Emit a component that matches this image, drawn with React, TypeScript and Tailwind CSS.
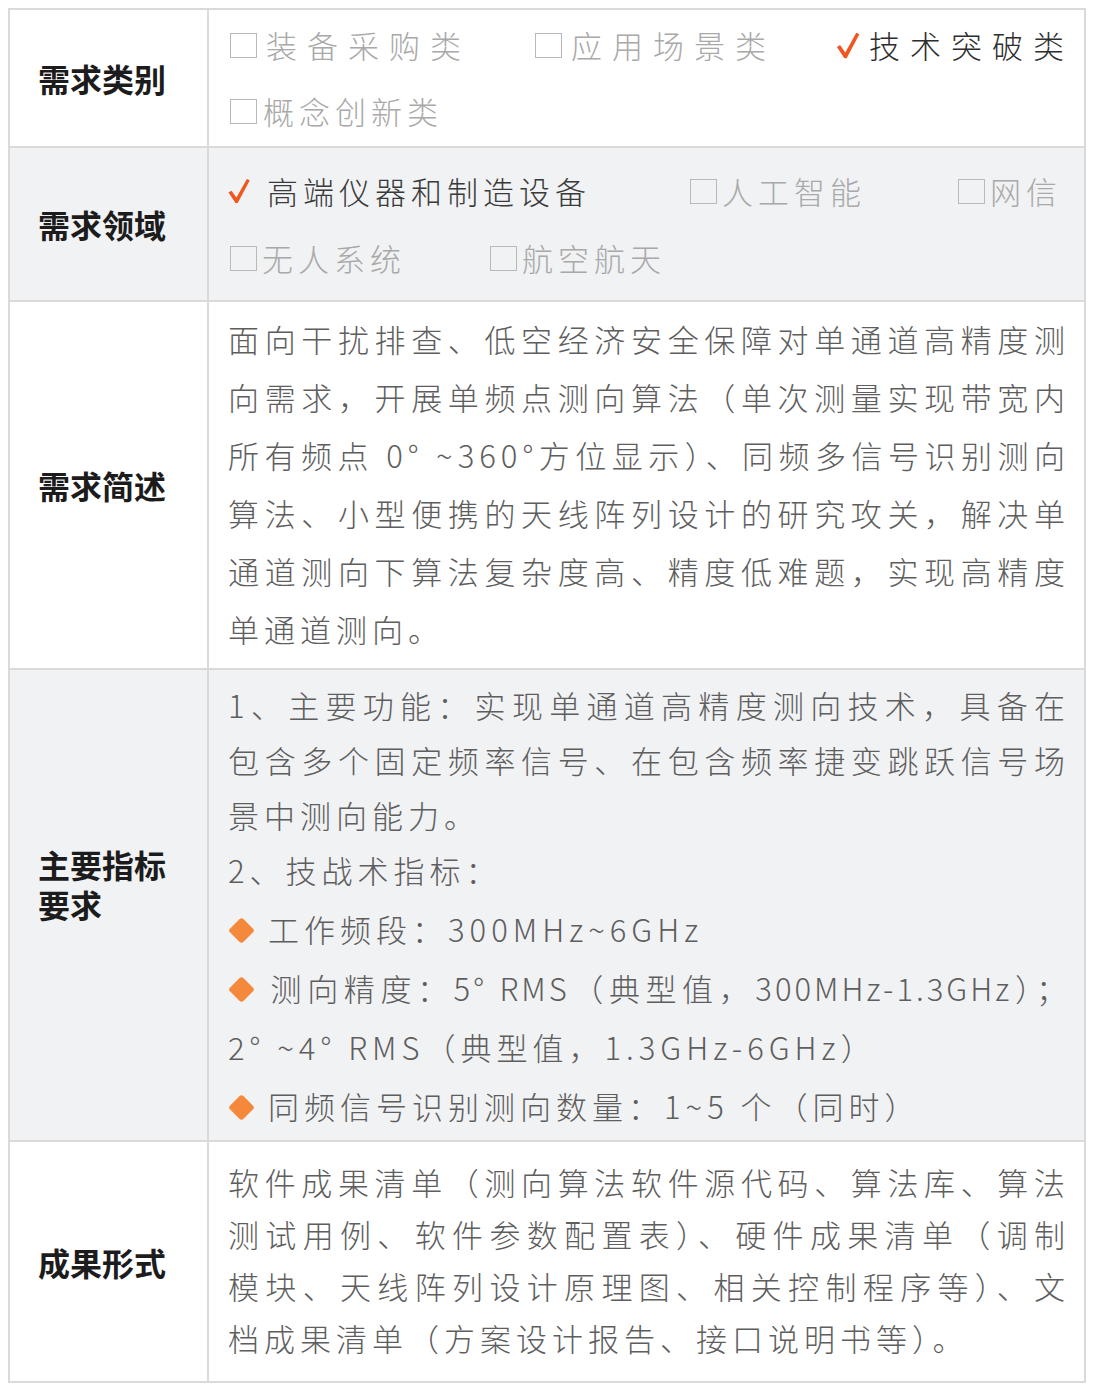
import React from "react";

const Box = () => (
  <span className="inline-block w-[27px] h-[25px] border-[1.5px] border-[#b9b9b9] shrink-0" />
);

const Check = ({ className = "" }: { className?: string }) => (
  <svg viewBox="0 0 24 28" className={className}>
    <path d="M0.5 15.5 L3.8 13.6 L9.2 21.2 L20.6 0.8 L23.8 2.4 L10.6 27.2 L8.2 27.2 Z" fill="#f0561f" />
  </svg>
);

const Diamond = () => (
  <span className="inline-block w-[40px] h-[26px] align-middle relative -top-[3px]">
    <span className="absolute left-[4px] top-[3px] w-[19px] h-[19px] bg-[#f5893b] rotate-45 rounded-[3px]" />
  </span>
);

const J = ({ children, h }: { children: React.ReactNode; h: string }) => (
  <div className={`${h} text-justify [text-align-last:justify]`}>{children}</div>
);
const L = ({ children, h }: { children: React.ReactNode; h: string }) => (
  <div className={h}>{children}</div>
);

const Label = ({ children, extra = "" }: { children: React.ReactNode; extra?: string }) => (
  <div className={`border-r-2 border-[#dadada] flex items-center pl-[28px] pr-[20px] ${extra}`}>
    <div className="text-[32px] font-bold tracking-normal text-[#1c1c1c] leading-[40px]">{children}</div>
  </div>
);

export default function App() {
  return (
    <div className="min-h-[1388px] bg-white pt-[8px] pl-[8px] font-['Noto_Sans_CJK_SC','Noto_Sans',sans-serif]">
      <div className="w-[1078px] border-2 border-[#dadada] text-[31px] font-light tracking-[5px] text-[#5e5e5e]">
        {/* Row 1 */}
        <div className="grid grid-cols-[199px_1fr] border-b-2 border-[#dadada] bg-white">
          <Label>需求类别</Label>
          <div className="pl-[19px] pr-[14px] pt-[6px] pb-[6px] flex flex-col gap-[8px]">
            <div className="h-[58px] flex items-center tracking-[10px] text-[#a9a9a9] whitespace-nowrap">
              <div className="w-[307px] shrink-0 flex items-center">
                <span className="ml-[2px]"><Box /></span>
                <span className="ml-[9px]">装备采购类</span>
              </div>
              <div className="w-[301px] shrink-0 flex items-center">
                <Box />
                <span className="ml-[9px]">应用场景类</span>
              </div>
              <div className="flex items-center text-[#2e2e2e] shrink-0">
                <Check className="w-[24px] h-[27px]" />
                <span className="ml-[9px]">技术突破类</span>
              </div>
            </div>
            <div className="h-[58px] flex items-center text-[#a9a9a9]">
              <span className="ml-[2px]"><Box /></span>
              <span className="ml-[6px]">概念创新类</span>
            </div>
          </div>
        </div>

        {/* Row 2 */}
        <div className="grid grid-cols-[199px_1fr] border-b-2 border-[#dadada] bg-[#f1f2f4]">
          <Label>需求领域</Label>
          <div className="pl-[19px] pr-[14px] pt-[14px] pb-[13px] flex flex-col gap-[9px] text-[#a9a9a9] whitespace-nowrap">
            <div className="h-[58px] flex items-center">
              <div className="w-[462px] shrink-0 flex items-center text-[#3a3a3a]">
                <Check className="w-[22px] h-[26px]" />
                <span className="ml-[17px]">高端仪器和制造设备</span>
              </div>
              <div className="w-[268px] shrink-0 flex items-center">
                <Box />
                <span className="ml-[5px]">人工智能</span>
              </div>
              <div className="flex items-center">
                <Box />
                <span className="ml-[5px]">网信</span>
              </div>
            </div>
            <div className="h-[58px] flex items-center">
              <div className="w-[262px] shrink-0 flex items-center">
                <span className="ml-[2px]"><Box /></span>
                <span className="ml-[5px]">无人系统</span>
              </div>
              <div className="flex items-center">
                <Box />
                <span className="ml-[5px]">航空航天</span>
              </div>
            </div>
          </div>
        </div>

        {/* Row 3 */}
        <div className="grid grid-cols-[199px_1fr] border-b-2 border-[#dadada] bg-white">
          <Label>需求简述</Label>
          <div className="pl-[19px] pr-[14px] pt-[8px] pb-[10px]">
            <J h="leading-[58px]">面向干扰排查、低空经济安全保障对单通道高精度测</J>
            <J h="leading-[58px]">向需求，开展单频点测向算法（单次测量实现带宽内</J>
            <J h="leading-[58px]">所有频点 0° ~360°方位显示）、同频多信号识别测向</J>
            <J h="leading-[58px]">算法、小型便携的天线阵列设计的研究攻关，解决单</J>
            <J h="leading-[58px]">通道测向下算法复杂度高、精度低难题，实现高精度</J>
            <L h="leading-[58px]">单通道测向。</L>
          </div>
        </div>

        {/* Row 4 */}
        <div className="grid grid-cols-[199px_1fr] border-b-2 border-[#dadada] bg-[#f1f2f4]">
          <Label extra="pb-[42px]">
            主要指标
            <br />
            要求
          </Label>
          <div className="pl-[19px] pr-[14px] pt-[7px] pb-[5px]">
            <J h="leading-[55px]">1、主要功能：实现单通道高精度测向技术，具备在</J>
            <J h="leading-[55px]">包含多个固定频率信号、在包含频率捷变跳跃信号场</J>
            <L h="leading-[55px]">景中测向能力。</L>
            <L h="leading-[55px]">2、技战术指标：</L>
            <L h="leading-[59px] mt-[2px]">
              <Diamond />
              工作频段：300MHz~6GHz
            </L>
            <J h="leading-[59px] tracking-[3px] whitespace-nowrap">
              <Diamond />
              测向精度：5° RMS（典型值，300MHz-1.3GHz）；
            </J>
            <L h="leading-[59px]">2° ~4° RMS（典型值，1.3GHz-6GHz）</L>
            <L h="leading-[59px]">
              <Diamond />
              同频信号识别测向数量：1~5 个（同时）
            </L>
          </div>
        </div>

        {/* Row 5 */}
        <div className="grid grid-cols-[199px_1fr] bg-white">
          <Label>成果形式</Label>
          <div className="pl-[19px] pr-[14px] pt-[14px] pb-[17px]">
            <J h="leading-[52px]">软件成果清单（测向算法软件源代码、算法库、算法</J>
            <J h="leading-[52px]">测试用例、软件参数配置表）、硬件成果清单（调制</J>
            <J h="leading-[52px]">模块、天线阵列设计原理图、相关控制程序等）、文</J>
            <L h="leading-[52px]">档成果清单（方案设计报告、接口说明书等）。</L>
          </div>
        </div>
      </div>
    </div>
  );
}
